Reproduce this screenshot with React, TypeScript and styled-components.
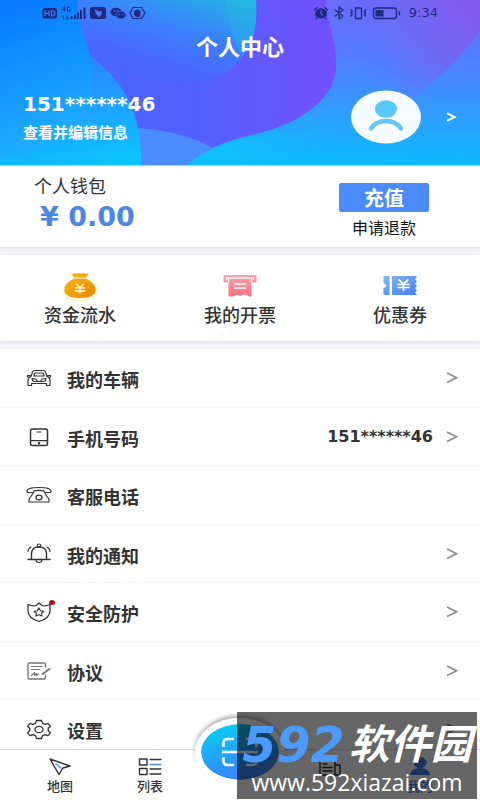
import React from "react";
import styled, { createGlobalStyle } from "styled-components";

const GlobalStyle = createGlobalStyle`
  * { box-sizing: border-box; }
  body {
    margin: 0;
    background: #f5f5f9;
    color: #333;
    font-family: "Noto Sans CJK SC", "Noto Sans", sans-serif;
  }
  button, a { font: inherit; color: inherit; text-decoration: none; }
  button { border: 0; padding: 0; background: none; cursor: pointer; }
  h1, p { margin: 0; }
`;

const Screen = styled.div`
  position: relative;
  display: flex;
  flex-direction: column;
  height: 100vh;
  overflow: hidden;
`;

const Content = styled.main`
  flex: 1;
  min-height: 0;
  overflow-y: auto;
  scrollbar-width: none;
`;

const Header = styled.header`
  position: relative;
  isolation: isolate;
  display: flex;
  flex-direction: column;
  height: 166px;
  color: #fff;
`;

const HeaderArt = styled.svg`
  position: absolute;
  inset: 0;
  z-index: -1;
  width: 100%;
  height: 100%;
`;

const StatusBar = styled.div`
  display: flex;
  justify-content: space-between;
  align-items: center;
  height: 26px;
  padding: 0 42px;
  color: #1d2a80;
`;

const StatusGroup = styled.div`
  display: flex;
  align-items: center;
  gap: 4px;
`;

const Clock = styled.time`
  margin-left: 4px;
  font: 13px/16px "DejaVu Sans", sans-serif;
`;

const Title = styled.h1`
  font-size: 22px;
  line-height: 38px;
  font-weight: 700;
  text-align: center;
`;

const Profile = styled.a`
  display: flex;
  align-items: center;
  height: 102px;
  padding: 4px 23px 0;
`;

const ProfileText = styled.div`
  flex: 1;
`;

const Digits = styled.span<{ $size: number }>`
  font-family: "DejaVu Sans", sans-serif;
  font-size: ${(p) => p.$size}px;
  line-height: 26px;
  font-weight: 700;
`;

const ProfileHint = styled.p`
  margin-top: 4px;
  font-size: 15px;
  line-height: 22px;
  font-weight: 700;
`;

const Avatar = styled.svg`
  margin-right: 24px;
`;

const Card = styled.section`
  background: #fff;
  box-shadow: 0 1px 4px rgba(60, 60, 110, 0.16);
`;

const Wallet = styled(Card)`
  display: flex;
  justify-content: space-between;
  height: 81px;
  margin-bottom: 8px;
  padding: 8px 51px 0 34px;
`;

const WalletLabel = styled.p`
  font-size: 18px;
  line-height: 22px;
`;

const Amount = styled.p`
  padding: 4px 0 0 6px;
  color: #4a86e8;
  font: 700 27px/34px "DejaVu Sans", sans-serif;
`;

const WalletActions = styled.div`
  display: flex;
  flex-direction: column;
  align-items: center;
  padding-top: 9px;
`;

const Recharge = styled.button`
  width: 90px;
  height: 29px;
  border-radius: 2px;
  background: #4b8bff;
  color: #fff;
  font-size: 20px;
  line-height: 28px;
  font-weight: 700;
`;

const Refund = styled.button`
  margin-top: 4px;
  color: #111;
  font-size: 16px;
  line-height: 22px;
`;

const Shortcuts = styled(Card)`
  display: grid;
  grid-template-columns: repeat(3, 1fr);
  height: 86px;
  margin-bottom: 8px;
`;

const Shortcut = styled.a`
  display: flex;
  flex-direction: column;
  align-items: center;
  padding-top: 16px;
  font-size: 18px;
  line-height: 22px;
  font-weight: 500;
`;

const Menu = styled.nav`
  background: #fff;
`;

const MenuRow = styled.a`
  display: flex;
  align-items: center;
  height: 59px;
  padding: 0 22px 0 24px;
  border-bottom: 1px solid #f1f1f3;
  font-size: 18px;
  font-weight: 700;

  &:nth-child(even) {
    height: 58px;
  }
`;

const MenuLabel = styled.span`
  flex: 1;
  margin-left: 13px;
  padding-top: 2px;
`;

const MenuValue = styled(Digits)`
  margin-right: 13px;
`;

const TabBar = styled.nav`
  position: relative;
  display: grid;
  grid-template-columns: repeat(5, 1fr);
  height: 51px;
  padding: 0 15px;
  border-top: 1px solid #dcdcdc;
  background: #fff;
`;

const Tab = styled.a<{ $active?: boolean }>`
  display: flex;
  flex-direction: column;
  align-items: center;
  padding-top: 7px;
  color: ${(p) => (p.$active ? "#3d7ff0" : "#333")};
  font-size: 13px;
  line-height: 18px;
  font-weight: 500;
`;

const ScanSlot = styled.div`
  position: relative;
`;

const ScanButton = styled.button`
  position: absolute;
  left: 50%;
  top: -32px;
  display: flex;
  align-items: center;
  justify-content: center;
  width: 90px;
  height: 68px;
  margin-left: -45px;
  border: 6px solid #fff;
  border-radius: 50%;
  background: linear-gradient(165deg, #0cc6f2 15%, #2e93ff 65%, #4a7dff);
  background-clip: padding-box;
  box-shadow: 0 -3px 5px -1px rgba(0, 0, 0, 0.4);
`;

const Watermark = styled.aside`
  position: absolute;
  right: 3px;
  bottom: 1px;
  display: flex;
  flex-direction: column;
  align-items: center;
  width: 240px;
  height: 87px;
  background: rgba(0, 0, 0, 0.6);
  color: #fff;
  white-space: nowrap;
`;

const Brand = styled.div`
  display: flex;
  align-items: center;
  gap: 4px;
  height: 56px;
  padding-top: 12px;
  font-size: 41px;
  line-height: 44px;
  font-weight: 700;
  font-style: italic;
`;

const BrandNumber = styled.span`
  color: #4b9bff;
  font-family: "DejaVu Sans", sans-serif;
  font-size: 49px;
`;

const BrandName = styled.span`
  padding-bottom: 10px;
`;

const Site = styled.div`
  font: 23px/28px "Open Sans", sans-serif;
`;

const line = {
  fill: "none",
  stroke: "currentColor",
  strokeLinecap: "round",
  strokeLinejoin: "round",
} as const;

const Chevron = ({ light = false }: { light?: boolean }) => (
  <svg width="12" height="12" viewBox="0 0 12 12" fill="none" stroke={light ? "#fff" : "#8d8d8d"} strokeWidth={light ? 2 : 1.7}>
    {light ? <path d="M2 2.2 9.5 6 2 9.8" /> : <path d="M1 1 10.5 5.7 1 10.4" />}
  </svg>
);

const HeaderBackground = () => (
  <HeaderArt viewBox="0 0 480 166" preserveAspectRatio="none" aria-hidden>
    <defs>
      <linearGradient id="left" x1="0.3" y1="0" x2="0.5" y2="1">
        <stop offset="0" stopColor="#077cff" /><stop offset="1" stopColor="#20b2ff" />
      </linearGradient>
      <linearGradient id="lower" x1="0.5" y1="0" x2="0.7" y2="1">
        <stop offset="0" stopColor="#3478ff" /><stop offset="1" stopColor="#0cc4ff" />
      </linearGradient>
      <linearGradient id="mid" x1="0.3" y1="1" x2="0.95" y2="0">
        <stop offset="0.25" stopColor="#4967ff" /><stop offset="0.6" stopColor="#3a82fb" /><stop offset="1" stopColor="#26b4e6" />
      </linearGradient>
      <linearGradient id="violet" x1="0" y1="0" x2="1" y2="0">
        <stop offset="0" stopColor="#4668ff" /><stop offset="0.5" stopColor="#5360ff" /><stop offset="1" stopColor="#7350fc" />
      </linearGradient>
      <linearGradient id="right" x1="0.45" y1="0" x2="0.4" y2="1">
        <stop offset="0" stopColor="#6b6afa" /><stop offset="0.45" stopColor="#4688ff" /><stop offset="1" stopColor="#0abfff" />
      </linearGradient>
      <linearGradient id="corner" x1="1" y1="0" x2="0.15" y2="0.5">
        <stop offset="0" stopColor="#8458ee" /><stop offset="0.5" stopColor="#7266f4" stopOpacity="0.8" /><stop offset="1" stopColor="#5c78fb" stopOpacity="0" />
      </linearGradient>
      <linearGradient id="pool" x1="0" y1="0" x2="1" y2="0">
        <stop offset="0" stopColor="#0cc4ff" /><stop offset="1" stopColor="#18b8ff" stopOpacity="0" />
      </linearGradient>
    </defs>
    <rect width="480" height="166" fill="url(#right)" />
    <path d="M60 0H325C328 24 337 42 336 68C334 94 312 113 284 125C263 134 229 138 209 150L180 166H60Z" fill="url(#violet)" />
    <path d="M70 0H256C259 34 248 66 212 79C192 86 165 82 150 78L70 60Z" fill="url(#mid)" />
    <path d="M130 128C162 128 190 136 214 148L186 166H130Z" fill="#4a8cff" />
    <path d="M186 166C204 149 228 144 250 136L350 133C320 150 290 158 262 166Z" fill="url(#pool)" />
    <path d="M325 0H480V31C462 56 440 78 416 95C395 112 370 120 334 120L336 68C337 42 328 24 325 0Z" fill="url(#corner)" />
    <path d="M226 0H256V10C257 28 254 42 242 56C232 40 228 20 226 0Z" fill="#1fc3dc" opacity="0.35" />
    <path d="M60 40C105 57 144 98 141 166H0V120Z" fill="url(#lower)" />
    <path d="M0 0H77C78 32 93 46 93 80C91 113 67 134 40 146C26 152 14 155 0 158Z" fill="url(#left)" />
    <rect y="165" width="480" height="1" fill="#79e4ff" />
  </HeaderArt>
);

const StatusLeft = () => (
  <svg width="106" height="16" viewBox="0 0 106 16" aria-hidden>
    <g fill="currentColor">
      <rect x="0.5" y="3" width="14.5" height="10.5" rx="2" />
      <path d="M28.500 11h2v3h-2zM32 9.500h2V14h-2zM35 7.500h2V14h-2zM38 5h2v9h-2zM41.500 2.500h2V14h-2z" />
      <rect x="48" y="2" width="16" height="12" rx="2.500" />
      <ellipse cx="74" cy="7" rx="5.500" ry="4.300" />
      <ellipse cx="79" cy="10" rx="5" ry="3.800" stroke="#3c69f7" strokeWidth="0.8" />
      <path d="M92 6l1.500-1 1 1V4h1.500v1.500L97 4v2l1.500-1v5l-1.500 2h-3l-2-2.500z" />
    </g>
    <g stroke="#238aff" strokeWidth="1.200" fill="none"><path d="M3 5.500v5.500M7 5.500v5.500M3 8.300h4M9.500 5.800V10.800H11Q13 10.500 13 8.300T11 5.800Z" /></g>
    <g stroke="currentColor" fill="none">
      <path d="M22.500 1.500 20.500 4.500H23.500M22.800 2v4.500M28 2.200h-2.500v4H28V4.500M21.500 14v-3.500l-1.200 1M25 10.500V14l1.500-1" />
      <path strokeWidth="1.200" d="M88 8l3-5.500h8.500L103 8l-3.500 5.500H91z" />
    </g>
    <path fill="#5079ff" d="M52 4l5 2.500 3-.5-.5 3-2 3.500-3-3z" />
    <g fill="#3c69f7"><circle cx="72.500" cy="6" r="0.900" /><circle cx="76" cy="6" r="0.900" /><circle cx="77.500" cy="9.500" r="0.700" /><circle cx="81" cy="9.500" r="0.700" /></g>
  </svg>
);

const StatusRight = () => (
  <svg width="88" height="16" viewBox="0 0 88 16" aria-hidden>
    <ellipse cx="8" cy="8.500" rx="6" ry="5" fill="currentColor" />
    <g {...line} strokeWidth="1.300">
      <path d="M1.500 5 4 2.500M12 2.500 14.500 5M3 14l1-1M13 14l-1-1" />
      <path d="M22 5l8 6-4 3V2l4 3-8 6M42.500 3h6v10.500h-6z" />
      <path d="M38 5l1 1.500-1 1.500 1 1.500-1 1.500M52.500 5l-1 1.500 1 1.500-1 1.500 1 1.500" strokeWidth="1.500" />
      <rect x="60.500" y="3" width="23" height="10.500" rx="2.500" /><path d="M86.500 6.500v3.500" />
    </g>
    <path d="M8 5.500v3.500l2 1.500" stroke="#7472f4" fill="none" />
    <rect x="62.500" y="5" width="8" height="6.500" fill="currentColor" />
  </svg>
);

const MoneyBag = () => (
  <svg width="40" height="32" viewBox="0 0 40 32" aria-hidden>
    <defs><linearGradient id="gold" x1="0" y1="0" x2="1" y2="1"><stop stopColor="#ffb814" /><stop offset="1" stopColor="#e58a00" /></linearGradient></defs>
    <ellipse cx="20" cy="20" rx="18" ry="11" fill="#ffeebc" opacity="0.6" />
    <path fill="url(#gold)" d="M11 2.500q2 1 4-.5 2 1 4.500 0 2.500 1 4.500 0 2 1.500 5 0l-3 4.500H14zM14.500 7.500h11C31 10 35.500 13 35.500 18.500c0 5.500-5 8.500-15.500 8.500S4.500 24 4.500 18.500c0-5.500 4.500-8.500 10-11z" />
    <path {...line} stroke="#fff4cc" strokeWidth="1.500" d="M16.500 13l3.500 4 3.500-4M15.500 17h9M15.500 20h9M20 17v5" />
  </svg>
);

const Invoice = () => (
  <svg width="40" height="32" viewBox="0 0 40 32" aria-hidden>
    <defs><linearGradient id="rose" x1="0" y1="0" x2="0" y2="1"><stop stopColor="#f9a3aa" /><stop offset="1" stopColor="#fb6f7e" /></linearGradient></defs>
    <path fill="url(#rose)" d="M5 4h30a1.500 1.500 0 0 1 1.500 1.500V10a1.500 1.500 0 0 1-1.500 1.500h-3.500V25q-2 1.500-4-.5-3.500-2-7 .5-4-2-6 0-3 1-6 0V11.500H5A1.500 1.500 0 0 1 3.500 10V5.500A1.500 1.500 0 0 1 5 4z" />
    <path {...line} stroke="#fff" strokeWidth="1.300" d="M6.500 8.500V7h27v1.500M8.500 8v3M31.500 8v3" />
    <path {...line} stroke="#fff" strokeWidth="1.500" d="M14.500 13h11M14.500 17h11" />
  </svg>
);

const Coupon = () => (
  <svg width="40" height="32" viewBox="0 0 40 32" aria-hidden>
    <defs><linearGradient id="azure" x1="0" y1="0" x2="1" y2="1"><stop stopColor="#87b4f4" /><stop offset="1" stopColor="#4381ef" /></linearGradient></defs>
    <path fill="url(#azure)" d="M3.500 5h6v19h-6V17q3-1 3-2.500t-3-2.500zM12 5h24.500v2q-3 1.200 0 2.500v2q-3 1.200 0 2.500v2q-3 1.200 0 2.500v2q-3 1.200 0 2.500V24H12z" />
    <path {...line} stroke="#fff" strokeWidth="1.700" d="M19 9l4.500 4 4.500-4M18 13.500h11M18 16.500h11M23.500 13.500v6" />
  </svg>
);

const icons: Record<string, React.ReactNode> = {
  car: (
    <path strokeWidth="1.200" d="M7 10.500 8.500 6Q9 4.500 10.500 4.500h9q1.500 0 2 1.500l1.500 4.500M9.800 10l1.200-3h8l1.200 3zM7 10.500 6 9.500H3.500v1.500h2M23 10.500l1-1h2.500v1.500h-2M6 11q-2 1-2 3v5.500h3.500v-2h15v2H26V14q0-2-2-3M8 12.500l4 .5 1.500 2.500H10Q8 15 8 12.500zM22 12.500l-4 .5-1.500 2.500H20q2-.5 2-3zM13.500 15.500h3" />
  ),
  phone: (
    <><rect x="6.500" y="4" width="17" height="16.500" rx="2" strokeWidth="1.500" /><path d="M7 15.700h16" strokeWidth="1.300" /><path d="M13 7h4" /><circle cx="15" cy="18.200" r="0.700" /></>
  ),
  service: (
    <><path strokeWidth="1.200" d="M3 8.500q-.5-4 12-4t12 4q0 1-1 1h-5q-1 0-1-1v-.700q-5-1-10 0v.700q0 1-1 1H4q-1 0-1-1zM9 10.500l-3.500 5q-1 2-.5 3.500h20q.5-1.500-.5-3.500l-3.500-5" /><ellipse cx="15" cy="14.500" rx="3" ry="2.300" strokeWidth="1.300" /></>
  ),
  bell: (
    <><path strokeWidth="1.400" d="M4 17.500h22M7.500 17.500V11Q8 5 15 5t7.500 6v6.500" /><ellipse cx="15" cy="3.500" rx="2" ry="1.500" /><path d="M12 18q0 2.500 3 2.500t3-2.500M4 9.500q0-3 3-4.500M26 9.500q0-3-3-4.500" /></>
  ),
  shield: (
    <><path strokeWidth="1.300" d="M15 3l3 2.500q3.500 1 8-1V11q0 7-11 10.500Q4 18 4 11V4.500q4.500 2 8 1z" /><path d="M15 8l1.600 2.800 3.400.5-2.500 2 .6 2.700-3.100-1.300-3.100 1.300.6-2.700-2.500-2 3.400-.5z" /><ellipse cx="28" cy="2.500" rx="3" ry="2.500" fill="#b8101f" stroke="none" /></>
  ),
  agreement: (
    <><path stroke="#777" strokeWidth="1.400" d="M21.500 8V5.500Q21.500 4 20 4H5.500Q4 4 4 5.500v13Q4 20 5.500 20H20q1.500 0 1.500-1.500V16" /><path stroke="#777" d="M7.500 7.500H18M7.500 10.500H16M7.500 16.500l3-3v3l2-2v2l2-1.500" /><path stroke="#777" strokeWidth="2" d="M18.500 15l7-5" /></>
  ),
  gear: (
    <><path d="M12.500 3.500h5l1 2.800 2.500 1 3-1 2.500 3-2.300 2v2.400l2.300 2-2.500 3-3-1-2.500 1-1 2.800h-5l-1-2.800-2.500-1-3 1-2.500-3 2.300-2v-2.400l-2.300-2 2.500-3 3 1 2.500-1z" strokeWidth="1.300" /><ellipse cx="15" cy="12.500" rx="4" ry="3.200" strokeWidth="1.300" /></>
  ),
};

const MenuIcon = ({ name }: { name: string }) => (
  <svg width="30" height="24" viewBox="0 0 30 24" overflow="visible" strokeWidth="1.100" {...line} aria-hidden>
    {icons[name]}
  </svg>
);

const rows = [
  { icon: "car", label: "我的车辆", arrow: true },
  { icon: "phone", label: "手机号码", value: "151******46", arrow: true },
  { icon: "service", label: "客服电话" },
  { icon: "bell", label: "我的通知", arrow: true },
  { icon: "shield", label: "安全防护", arrow: true },
  { icon: "agreement", label: "协议", arrow: true },
  { icon: "gear", label: "设置", arrow: true },
];

export default function App() {
  return (
    <>
      <GlobalStyle />
      <Screen>
        <Content>
          <Header>
            <HeaderBackground />
            <StatusBar>
              <StatusGroup><StatusLeft /></StatusGroup>
              <StatusGroup><StatusRight /><Clock>9:34</Clock></StatusGroup>
            </StatusBar>
            <Title>个人中心</Title>
            <Profile href="#profile">
              <ProfileText>
                <Digits $size={20}>151******46</Digits>
                <ProfileHint>查看并编辑信息</ProfileHint>
              </ProfileText>
              <Avatar width="70" height="54" viewBox="0 0 70 54" aria-hidden>
                <ellipse cx="35" cy="27" rx="35" ry="26.500" fill="#f6fcff" />
                <ellipse cx="35" cy="19" rx="11" ry="8.700" fill="#58c9fb" />
                <path d="M20 38.500Q25 31 35 31t15 7.500" fill="none" stroke="#64c5f8" strokeWidth="4.500" strokeLinecap="round" />
              </Avatar>
              <Chevron light />
            </Profile>
          </Header>

          <Wallet>
            <div>
              <WalletLabel>个人钱包</WalletLabel>
              <Amount>¥ 0.00</Amount>
            </div>
            <WalletActions>
              <Recharge>充值</Recharge>
              <Refund>申请退款</Refund>
            </WalletActions>
          </Wallet>

          <Shortcuts>
            <Shortcut href="#flow"><MoneyBag />资金流水</Shortcut>
            <Shortcut href="#invoice"><Invoice />我的开票</Shortcut>
            <Shortcut href="#coupon"><Coupon />优惠券</Shortcut>
          </Shortcuts>

          <Menu>
            {rows.map((row) => (
              <MenuRow key={row.icon} href={`#${row.icon}`}>
                <MenuIcon name={row.icon} />
                <MenuLabel>{row.label}</MenuLabel>
                {row.value && <MenuValue $size={16}>{row.value}</MenuValue>}
                {row.arrow && <Chevron />}
              </MenuRow>
            ))}
          </Menu>
        </Content>

        <TabBar>
          <Tab href="#map">
            <svg width="24" height="20" viewBox="0 0 24 20" strokeWidth="1.400" {...line} aria-hidden>
              <path d="M2 2 22 9l-7 2-4 6.500z" /><path d="M8 7l5 4" stroke="#4b8bff" />
            </svg>
            地图
          </Tab>
          <Tab href="#list">
            <svg width="24" height="20" viewBox="0 0 24 20" strokeWidth="1.400" {...line} aria-hidden>
              <path d="M1.500 2H9v6H1.500zM1.500 11.500H9v6H1.500zM12 2.500h11M12 12h11M12 17h11" /><path d="M12 7.500h11" stroke="#4b8bff" />
            </svg>
            列表
          </Tab>
          <ScanSlot>
            <ScanButton aria-label="扫一扫">
              <svg width="40" height="30" viewBox="0 0 40 30" fill="none" stroke="#fff" strokeWidth="2.500" aria-hidden>
                <path d="M14 2H8Q3.500 2 3.500 5.500V10M26 2h6q4.500 0 4.500 3.500V10M14 28H8Q3.500 28 3.500 24.500V20M26 28h6q4.500 0 4.500-3.500V20M2 15h36" />
              </svg>
            </ScanButton>
          </ScanSlot>
          <Tab href="#news" aria-label="资讯">
            <svg width="24" height="20" viewBox="0 0 24 20" strokeWidth="1.400" {...line} aria-hidden>
              <path d="M2 3h15v15H2zM17 8h5v8q0 2-2.500 2H17M5 7h4M5 10.500h9M5 14h9" />
            </svg>
          </Tab>
          <Tab href="#mine" $active>
            <svg width="28" height="20" viewBox="0 0 28 20" overflow="visible" aria-hidden>
              <ellipse cx="14" cy="5.500" rx="6.500" ry="5.500" fill="currentColor" /><path d="M4 18q1-7 10-7t10 7z" fill="currentColor" />
              <ellipse cx="30" cy="2.500" rx="3.500" ry="3" fill="#e9806c" />
            </svg>
            我的
          </Tab>
        </TabBar>

        <Watermark>
          <Brand><BrandNumber>592</BrandNumber><BrandName>软件园</BrandName></Brand>
          <Site>www.592xiazai.com</Site>
        </Watermark>
      </Screen>
    </>
  );
}
